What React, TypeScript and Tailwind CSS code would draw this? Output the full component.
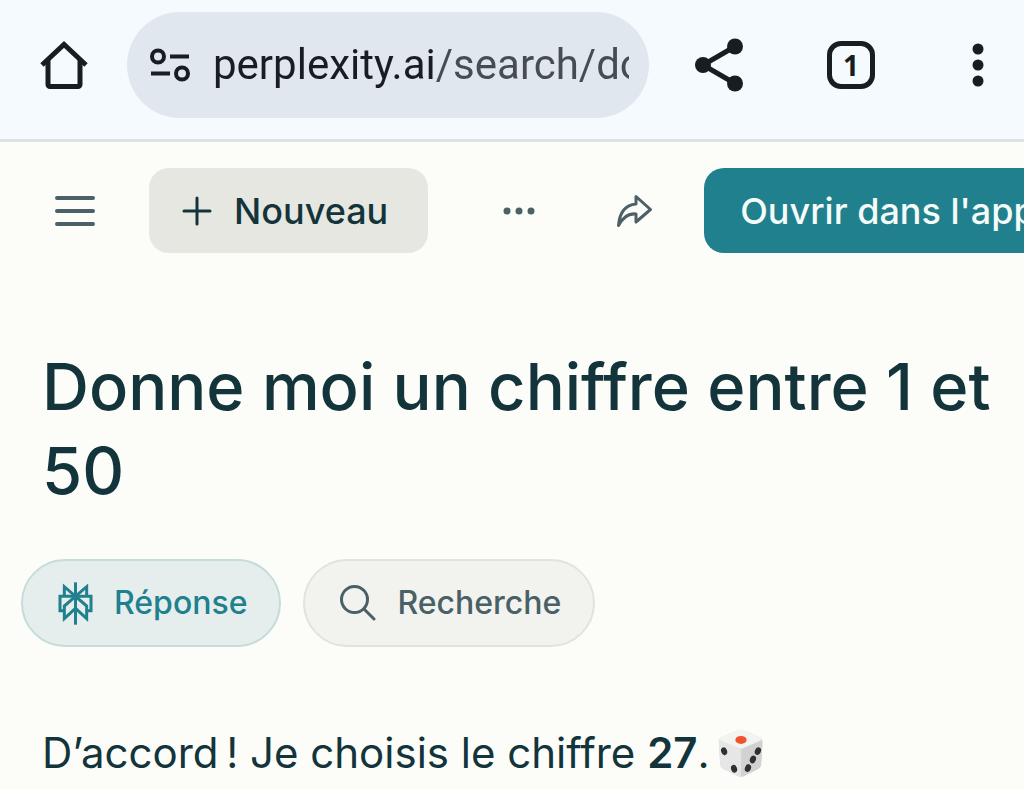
import { useState } from "react";
import { clsx } from "clsx";

function HomeIcon() {
  return (
    <svg viewBox="0 0 48 50" className="h-[50px] w-12" fill="none" stroke="currentColor" strokeWidth="5">
      <path d="M2 25 24 4.500 46 25" />
      <path d="M8 20v24.500a2 2 0 0 0 2 2h28a2 2 0 0 0 2-2V20" />
    </svg>
  );
}

function SiteSettingsIcon() {
  return (
    <svg viewBox="0 0 42 34" className="h-[34px] w-[42px] shrink-0" fill="none" stroke="currentColor" strokeWidth="4">
      <circle cx="9" cy="8.500" r="6" />
      <path d="M21 8.500h19M2 25.500h19" />
      <circle cx="33" cy="25.500" r="6" />
    </svg>
  );
}

function ShareNodesIcon() {
  return (
    <svg viewBox="0 0 50 54" className="h-[54px] w-[50px]" fill="currentColor">
      <path d="M41 8.500 9 27l32 18.500" fill="none" stroke="currentColor" strokeWidth="5" />
      <circle cx="9" cy="27" r="8" />
      <circle cx="41" cy="8.500" r="8" />
      <circle cx="41" cy="45.500" r="8" />
    </svg>
  );
}

function KebabIcon() {
  return (
    <svg viewBox="0 0 12 44" className="h-11 w-3" fill="currentColor">
      <circle cx="6" cy="6" r="5.500" />
      <circle cx="6" cy="22" r="5.500" />
      <circle cx="6" cy="38" r="5.500" />
    </svg>
  );
}

function ForwardIcon() {
  return (
    <svg
      viewBox="0 0 38 34"
      className="h-[34px] w-[38px]"
      fill="none"
      stroke="currentColor"
      strokeWidth="3"
      strokeLinejoin="round"
    >
      <path d="M20 2.500 34.500 15.500 20 28v-8C12 19 7 23 2.500 31.500 3.500 19 9 11 20 10Z" />
    </svg>
  );
}

function AnswerIcon() {
  return (
    <svg viewBox="145 122 105 135" className="h-[45px] w-[35px]" fill="none" stroke="currentColor" strokeWidth="9">
      <path d="M197.500 126v127" />
      <path d="M164 168v-29l33.500 29L231 139v29" />
      <path d="M164 211h-13v-43h93v43h-13" />
      <path d="M197.500 168 164 197v38l33.500-31L231 235v-38Z" />
    </svg>
  );
}

function SearchIcon() {
  return (
    <svg viewBox="0 0 36 36" className="size-9" fill="none" stroke="currentColor" strokeWidth="3" strokeLinecap="round">
      <circle cx="14.500" cy="14.500" r="13" />
      <path d="m24 24 10 10" />
    </svg>
  );
}

function Dice() {
  return (
    <svg viewBox="54 27 136 145" className="h-12 w-[46px]" role="img" aria-label="Dé">
      <path d="M113 31q8-4 17 0l49 21q8 4 8 13l-4 69q-1 8-8 13l-43 22q-10 4-20 0l-45-22q-7-5-8-13l-4-69q0-9 8-13Z" fill="#dedede" />
      <path d="M113 31q8-4 17 0l49 21q6 4 3 10l-50 22q-10 5-20 0L59 62q-2-6 4-10Z" fill="#f3f3f2" />
      <path d="M58 61 112 84q9 4 9 15l1 72q-5 0-10-2l-45-22q-7-5-8-13l-4-69Z" fill="#e6e6e6" />
      <path d="m184 61-52 23q-9 4-9 15l-1 72q5 0 10-2l43-22q7-5 8-13l4-69Z" fill="#d2d2d2" />
      <ellipse cx="122" cy="60" rx="17" ry="12" fill="#f0532d" />
      <g fill="#303030">
        <ellipse cx="71" cy="94" rx="9" ry="12" transform="rotate(-18 71 94)" />
        <ellipse cx="101" cy="147" rx="9" ry="12" transform="rotate(-18 101 147)" />
        <ellipse cx="173" cy="94" rx="9" ry="12" transform="rotate(22 173 94)" />
        <ellipse cx="158" cy="119" rx="9" ry="12" transform="rotate(22 158 119)" />
        <ellipse cx="143" cy="145" rx="9" ry="12" transform="rotate(22 143 145)" />
      </g>
    </svg>
  );
}

const tabs = [
  { id: "answer", label: "Réponse", icon: AnswerIcon },
  { id: "search", label: "Recherche", icon: SearchIcon },
] as const;

export default function App() {
  const [activeTab, setActiveTab] = useState<string>("answer");

  return (
    <div className="min-h-screen overflow-hidden bg-[#fcfdf8] font-['Inter',sans-serif] text-[#13343b]">
      {/* Browser bar */}
      <header className="flex items-center border-b-3 border-[#dce2e6] bg-[#f5faff] pt-3 pr-10 pb-[21px] pl-10 text-[#171d20]">
        <button type="button" aria-label="Accueil" className="mr-[39px] shrink-0">
          <HomeIcon />
        </button>
        <div className="flex h-[106px] min-w-0 flex-1 items-center gap-[22px] rounded-full bg-[#e1e7ef] pr-5 pl-[22px]">
          <SiteSettingsIcon />
          <input
            type="text"
            aria-label="Adresse"
            defaultValue="perplexity.ai/search/do"
            className="w-full min-w-0 bg-[linear-gradient(90deg,#171d20_223px,#454c52_223px)] bg-clip-text font-['Roboto',sans-serif] text-[42px] leading-[60px] text-transparent caret-[#171d20] outline-none"
          />
        </div>
        <button type="button" aria-label="Partager la page" className="ml-[45px] shrink-0">
          <ShareNodesIcon />
        </button>
        <button
          type="button"
          aria-label="Onglets"
          className="ml-[83px] flex size-12 shrink-0 items-center justify-center rounded-[14px] border-5 border-current font-['Open_Sans',sans-serif] text-[28px] leading-none font-bold"
        >
          1
        </button>
        <button type="button" aria-label="Plus d'options" className="ml-[97px] shrink-0">
          <KebabIcon />
        </button>
      </header>

      {/* Site toolbar */}
      <nav className="flex items-center overflow-hidden pt-[26px] pl-[54px] whitespace-nowrap text-[#4b6167]">
        <button type="button" aria-label="Menu" className="shrink-0">
          <svg viewBox="0 0 42 34" className="h-[34px] w-[42px]" stroke="currentColor" strokeWidth="4" strokeLinecap="round">
            <path d="M3 4h36M3 17h36M3 30h36" />
          </svg>
        </button>
        <button
          type="button"
          className="ml-[53px] flex h-[85px] shrink-0 items-center gap-[22px] rounded-[20px] bg-[#e6e7e1] pr-10 pl-[33px] text-[36px] font-medium text-[#13343b]"
        >
          <svg viewBox="0 0 30 30" className="size-[30px]" stroke="currentColor" strokeWidth="3" strokeLinecap="round">
            <path d="M15 2v26M2 15h26" />
          </svg>
          Nouveau
        </button>
        <button type="button" aria-label="Plus" className="ml-[74px] shrink-0">
          <svg viewBox="0 0 34 10" className="h-[10px] w-[34px]" fill="currentColor">
            <circle cx="5" cy="5" r="3.500" />
            <circle cx="17" cy="5" r="3.500" />
            <circle cx="29" cy="5" r="3.500" />
          </svg>
        </button>
        <button type="button" aria-label="Partager" className="ml-20 shrink-0">
          <ForwardIcon />
        </button>
        <a
          href="#app"
          className="ml-[50px] flex h-[85px] shrink-0 items-center rounded-[20px] bg-[#21808d] px-9 text-[36px] font-medium text-[#f4fbf9]"
        >
          Ouvrir dans l'app
        </a>
      </nav>

      <main>
        <h1 className="mt-[92px] pr-6 pl-[42px] text-[65px] leading-[84px] font-medium">
          Donne moi un chiffre entre 1 et 50
        </h1>

        <div role="tablist" className="mt-[46px] flex gap-[22px] px-[21px]">
          {tabs.map(({ id, label, icon: Icon }) => (
            <button
              key={id}
              type="button"
              role="tab"
              aria-selected={activeTab === id}
              onClick={() => setActiveTab(id)}
              className={clsx(
                "flex h-[88px] items-center gap-[21px] rounded-full border-2 pr-8 pl-[35px] text-[32px] font-medium",
                activeTab === id
                  ? "border-[#c5dcda] bg-[#e5eeed] text-[#21808d]"
                  : "border-[#e1e3de] bg-[#f2f3ee] text-[#486066]"
              )}
            >
              <Icon />
              {label}
            </button>
          ))}
        </div>

        <p className="mt-[76px] flex items-center gap-2 px-[42px] text-[42px] leading-[60px]">
          <span>
            D’accord{"\u202f"}! Je choisis le chiffre <strong className="font-semibold">27</strong>.
          </span>
          <Dice />
        </p>
      </main>
    </div>
  );
}
